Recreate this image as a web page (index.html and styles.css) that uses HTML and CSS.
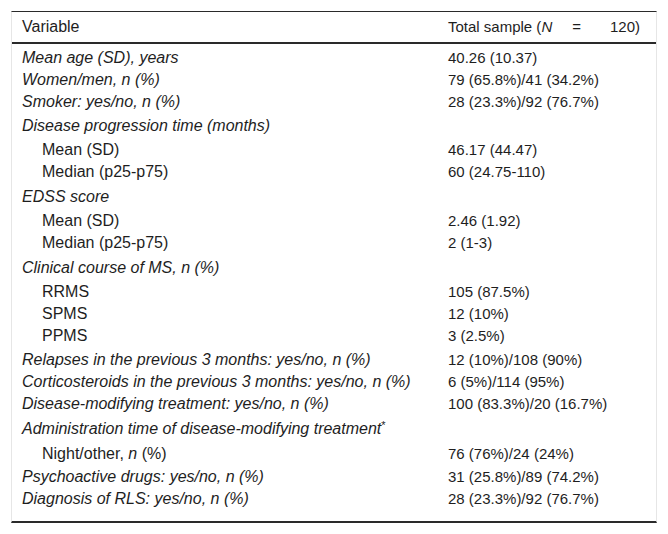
FILE: index.html
```html
<!DOCTYPE html>
<html lang="en">
<head>
<meta charset="utf-8">
<title>Table</title>
<link rel="stylesheet" href="styles.css">
</head>
<body>
<div class="tbl">
  <div class="row head">
    <div class="c1">Variable</div>
    <div class="c2 hd">Total sample (<i>N</i><span class="eq">=</span>120)</div>
  </div>
  <div class="row first"><div class="c1 it">Mean age (SD), years</div><div class="c2">40.26 (10.37)</div></div>
  <div class="row"><div class="c1 it">Women/men, n (%)</div><div class="c2">79 (65.8%)/41 (34.2%)</div></div>
  <div class="row"><div class="c1 it">Smoker: yes/no, n (%)</div><div class="c2">28 (23.3%)/92 (76.7%)</div></div>
  <div class="row t4"><div class="c1 it">Disease progression time (months)</div><div class="c2"></div></div>
  <div class="row t4"><div class="c1 sub">Mean (SD)</div><div class="c2">46.17 (44.47)</div></div>
  <div class="row"><div class="c1 sub">Median (p25-p75)</div><div class="c2">60 (24.75-110)</div></div>
  <div class="row t5"><div class="c1 it">EDSS score</div><div class="c2"></div></div>
  <div class="row t4"><div class="c1 sub">Mean (SD)</div><div class="c2">2.46 (1.92)</div></div>
  <div class="row"><div class="c1 sub">Median (p25-p75)</div><div class="c2">2 (1-3)</div></div>
  <div class="row t5"><div class="c1 it">Clinical course of MS, n (%)</div><div class="c2"></div></div>
  <div class="row t4"><div class="c1 sub">RRMS</div><div class="c2">105 (87.5%)</div></div>
  <div class="row"><div class="c1 sub">SPMS</div><div class="c2">12 (10%)</div></div>
  <div class="row"><div class="c1 sub">PPMS</div><div class="c2">3 (2.5%)</div></div>
  <div class="row t4"><div class="c1 it">Relapses in the previous 3 months: yes/no, n (%)</div><div class="c2">12 (10%)/108 (90%)</div></div>
  <div class="row"><div class="c1 it">Corticosteroids in the previous 3 months: yes/no, n (%)</div><div class="c2">6 (5%)/114 (95%)</div></div>
  <div class="row"><div class="c1 it">Disease-modifying treatment: yes/no, n (%)</div><div class="c2">100 (83.3%)/20 (16.7%)</div></div>
  <div class="row t5"><div class="c1 it">Administration time of disease-modifying treatment<sup>*</sup></div><div class="c2"></div></div>
  <div class="row t45"><div class="c1 sub">Night/other, <i>n</i> (%)</div><div class="c2">76 (76%)/24 (24%)</div></div>
  <div class="row t3"><div class="c1 it">Psychoactive drugs: yes/no, n (%)</div><div class="c2">31 (25.8%)/89 (74.2%)</div></div>
  <div class="row last"><div class="c1 it">Diagnosis of RLS: yes/no, n (%)</div><div class="c2">28 (23.3%)/92 (76.7%)</div></div>
</div>
</body>
</html>
```
FILE: styles.css
```css
html, body {
  margin: 0;
  padding: 0;
  background: #ffffff;
}

body {
  font-family: "Liberation Sans", Arial, sans-serif;
  font-size: 16px;
  line-height: 18px;
  color: #1e1e1e;
}

.tbl {
  margin: 11px 0 0 11px;
  width: 646px;
  box-sizing: border-box;
  border-top: 1px solid #2a2a2a;
  border-bottom: 2px solid #2a2a2a;
  border-left: 1px solid #e6e6e6;
  border-right: 1px solid #e6e6e6;
}

.row {
  display: grid;
  grid-template-columns: 436px 1fr;
  align-items: baseline;
  padding: 2px 0 2px;
}

.row.head {
  padding: 6px 0 6px;
  border-bottom: 2px solid #2a2a2a;
}

.row.first { padding-top: 5px; }
.row.t3 { padding-top: 3px; }
.row.t4 { padding-top: 4px; }
.row.t45 { padding-top: 4.5px; }
.row.t5 { padding-top: 5px; }
.row.last { padding-bottom: 13px; }

.c1 {
  padding-left: 10px;
  white-space: nowrap;
}

.c1.sub {
  padding-left: 30px;
}

.it {
  font-style: italic;
}

.c2 {
  font-size: 15px;
  white-space: nowrap;
}

.eq {
  display: inline-block;
  margin: 0 29px 0 20px;
}

sup {
  font-size: 11px;
  line-height: 0;
  vertical-align: 5px;
  font-style: normal;
}
```
